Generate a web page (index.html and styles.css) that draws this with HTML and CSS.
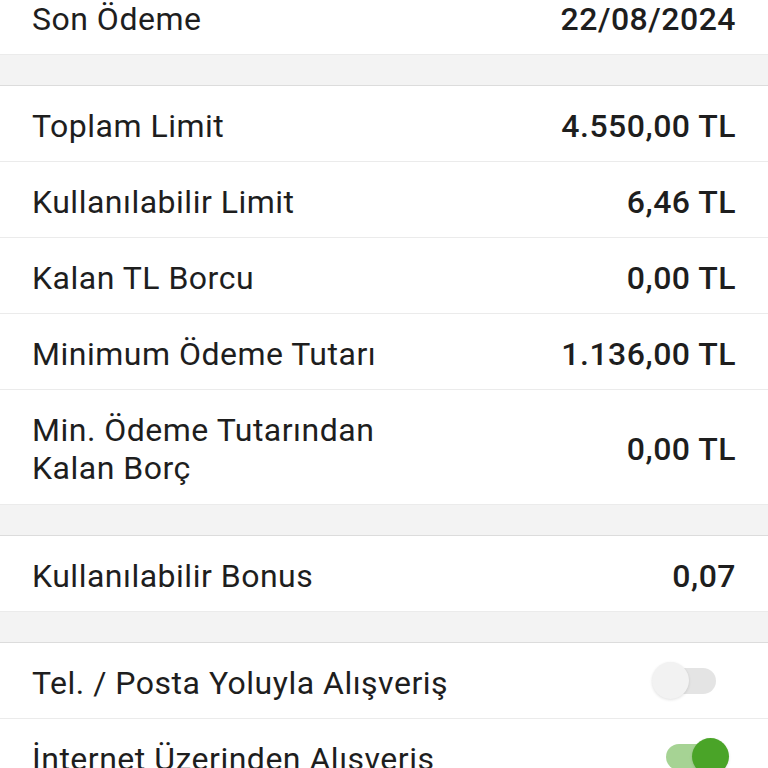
FILE: index.html
```html
<!DOCTYPE html>
<html lang="tr">
<head>
<meta charset="utf-8">
<link rel="stylesheet" href="styles.css">
</head>
<body>
<div class="page">
  <div class="row"><span class="label">Son Ödeme</span><span class="value">22/08/2024</span></div>
  <div class="gap"></div>
  <div class="row"><span class="label">Toplam Limit</span><span class="value">4.550,00 TL</span></div>
  <div class="row"><span class="label">Kullanılabilir Limit</span><span class="value">6,46 TL</span></div>
  <div class="row"><span class="label">Kalan TL Borcu</span><span class="value">0,00 TL</span></div>
  <div class="row"><span class="label">Minimum Ödeme Tutarı</span><span class="value">1.136,00 TL</span></div>
  <div class="row tall"><span class="label">Min. Ödeme Tutarından<br>Kalan Borç</span><span class="value">0,00 TL</span></div>
  <div class="gap"></div>
  <div class="row"><span class="label">Kullanılabilir Bonus</span><span class="value">0,07</span></div>
  <div class="gap"></div>
  <div class="row"><span class="label">Tel. / Posta Yoluyla Alışveriş</span><span class="switch"><span class="track"></span><span class="thumb"></span></span></div>
  <div class="row"><span class="label">İnternet Üzerinden Alışveriş</span><span class="switch on"><span class="track"></span><span class="thumb"></span></span></div>
</div>
</body>
</html>
```
FILE: styles.css
```css
html, body {
  margin: 0;
  padding: 0;
  background: #ffffff;
}
.page {
  margin-top: -21px;
  font-family: Roboto, "Noto Sans", sans-serif;
  color: #1e1e1e;
  font-size: 32px;
  letter-spacing: 0.5px;
}
.row {
  height: 75px;
  border-bottom: 1px solid #ebebeb;
  display: flex;
  align-items: center;
  justify-content: space-between;
  padding: 0 32px;
  background: #fff;
}
.row.tall {
  height: 114px;
}
.label {
  line-height: 38px;
  padding-top: 4px;
  white-space: nowrap;
}
.value {
  font-weight: 500;
  padding-top: 4px;
}
.gap {
  height: 30px;
  background: #f3f3f3;
  border-bottom: 1px solid #dcdcdc;
}
.switch {
  position: relative;
  flex: none;
  width: 64px;
  height: 37px;
  margin-right: 20px;
}
.track {
  position: absolute;
  left: 12px;
  top: 6px;
  width: 52px;
  height: 26px;
  border-radius: 13px;
  background: #e4e4e4;
}
.thumb {
  position: absolute;
  left: 0;
  top: 0;
  width: 37px;
  height: 37px;
  border-radius: 50%;
  background: #f2f2f2;
  box-shadow: 0 1px 3px rgba(0,0,0,0.12);
}
.switch.on {
  margin-right: 6px;
}
.switch.on .track {
  left: 0;
  background: #a6d394;
}
.switch.on .thumb {
  left: 26px;
  background: #4aa428;
}
```
